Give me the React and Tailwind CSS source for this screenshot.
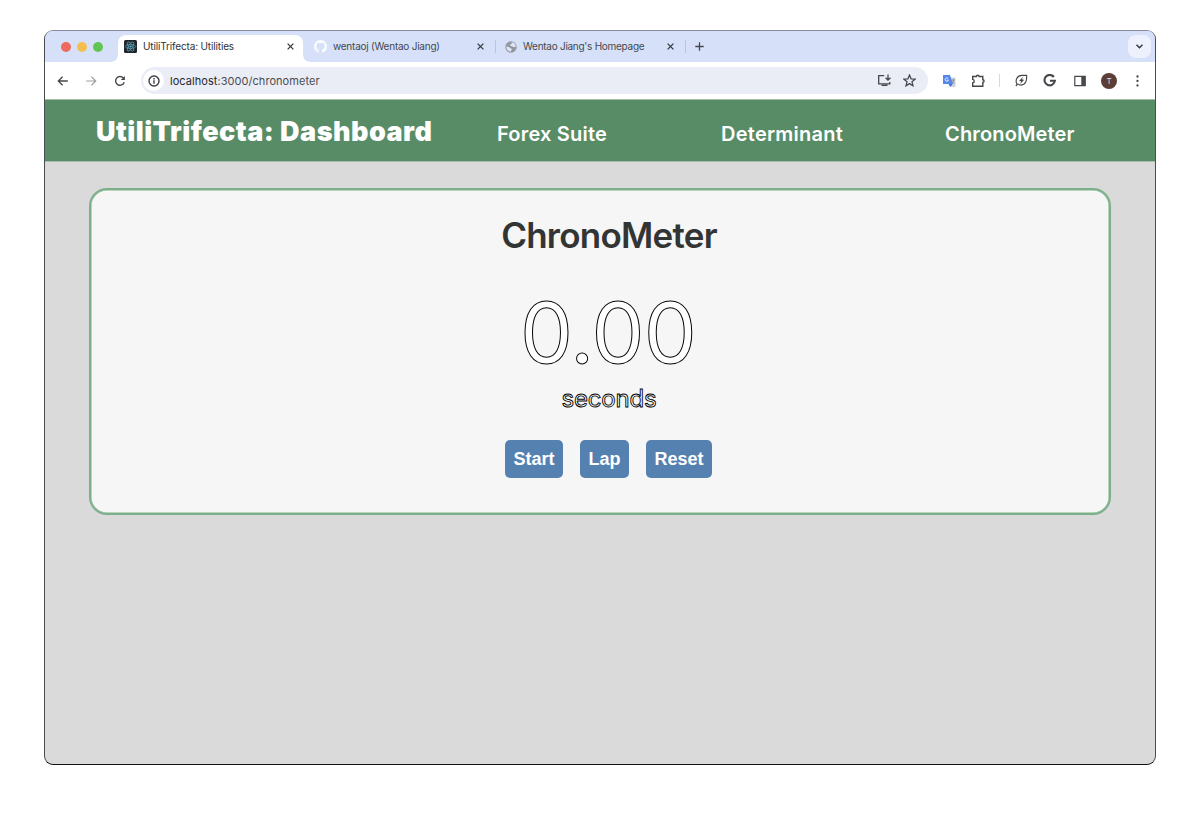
import React from "react";

function Close() {
  return (
    <svg className="block h-[7px] w-[7px] shrink-0" viewBox="0 0 7 7" stroke="#3a3c40" strokeWidth="1.3">
      <path d="M.6 .6 6.4 6.4M6.4 .6 .6 6.4" />
    </svg>
  );
}

function ReactLogo() {
  return (
    <svg className="block h-[13px] w-[13px] shrink-0" viewBox="0 0 13 13" fill="none" stroke="#5fa8bf" strokeWidth=".7">
      <rect width="13" height="13" rx="1.5" fill="#20242b" stroke="none" />
      <ellipse cx="6.5" cy="6.5" rx="5.2" ry="2" />
      <ellipse cx="6.5" cy="6.5" rx="5.2" ry="2" transform="rotate(60 6.5 6.5)" />
      <ellipse cx="6.5" cy="6.5" rx="5.2" ry="2" transform="rotate(120 6.5 6.5)" />
      <circle cx="6.5" cy="6.5" r=".8" fill="#5fa8bf" />
    </svg>
  );
}

function GitHubLogo() {
  return (
    <svg className="block h-[13px] w-[13px] shrink-0" viewBox="0 0 16 16" fill="#fbfcff">
      <path d="M8 0C3.58 0 0 3.58 0 8c0 3.54 2.29 6.53 5.47 7.59.4.07.55-.17.55-.38 0-.19-.01-.82-.01-1.49-2.01.37-2.53-.49-2.69-.94-.09-.23-.48-.94-.82-1.13-.28-.15-.68-.52-.01-.53.63-.01 1.08.58 1.23.82.72 1.21 1.87.87 2.33.66.07-.52.28-.87.51-1.07-1.78-.2-3.64-.89-3.64-3.95 0-.87.31-1.59.82-2.15-.08-.2-.36-1.02.08-2.12 0 0 .67-.21 2.2.82a7.6 7.6 0 0 1 4 0c1.53-1.04 2.2-.82 2.2-.82.44 1.1.16 1.92.08 2.12.51.56.82 1.27.82 2.15 0 3.07-1.87 3.75-3.65 3.95.29.25.54.73.54 1.48 0 1.07-.01 1.93-.01 2.2 0 .21.15.46.55.38A8 8 0 0 0 16 8c0-4.42-3.58-8-8-8z" />
    </svg>
  );
}

function Globe() {
  return (
    <svg className="block h-[12px] w-[12px] shrink-0" viewBox="0 0 12 12">
      <circle cx="6" cy="6" r="5.7" fill="#94979d" />
      <path d="M6.3 1.3C8.7 1.3 10.7 3.2 10.8 5.5 9.6 6.4 8.3 6.2 7.3 5.2L5.4 5 5.1 3.6 7 2.7zM1.3 5.6 4 5.9l1.8 1.5 1.4.6-1 1.1-.2 1.6C3.3 10.6 1.3 8.4 1.3 5.6z" fill="#dfe7f7" />
    </svg>
  );
}

function TabStrip() {
  return (
    <div className="flex h-[31px] items-center bg-[#d6e1f9] text-[10px] text-[#45484d]">
      <div className="ml-[16px] flex w-[57px] shrink-0 gap-[6px]">
        <span className="h-[10px] w-[10px] rounded-full bg-[#ed6a5e]" />
        <span className="h-[10px] w-[10px] rounded-full bg-[#f5bf4f]" />
        <span className="h-[10px] w-[10px] rounded-full bg-[#61c554]" />
      </div>
      <div className="relative flex h-[27px] w-[185px] shrink-0 items-center self-end rounded-t-[8px] bg-white pr-[9px] pb-[5px] pl-[6px] text-[#303236]">
        <svg className="absolute bottom-0 -left-[8px] h-2 w-2" viewBox="0 0 8 8"><path d="M8 0v8H0C5 8 8 5 8 0z" fill="#fff" /></svg>
        <svg className="absolute -right-[8px] bottom-0 h-2 w-2" viewBox="0 0 8 8"><path d="M0 0v8h8C3 8 0 5 0 0z" fill="#fff" /></svg>
        <ReactLogo />
        <span className="ml-[6px] flex-1 tracking-[-0.15px] whitespace-nowrap">UtiliTrifecta: Utilities</span>
        <Close />
      </div>
      <div className="flex w-[181px] shrink-0 items-center pl-[11px]">
        <GitHubLogo />
        <span className="ml-[6px] flex-1 tracking-[-0.23px] whitespace-nowrap">wentaoj (Wentao Jiang)</span>
        <Close />
      </div>
      <span className="ml-[11px] h-[13px] w-px shrink-0 bg-[#aec7ef]" />
      <div className="flex w-[178px] shrink-0 items-center pl-[9px]">
        <Globe />
        <span className="ml-[6px] flex-1 tracking-[-0.27px] whitespace-nowrap">Wentao Jiang's Homepage</span>
        <Close />
      </div>
      <span className="ml-[11px] h-[13px] w-px shrink-0 bg-[#aec7ef]" />
      <svg className="ml-[9px] h-[9px] w-[9px] shrink-0" viewBox="0 0 9 9" stroke="#45484d" strokeWidth="1.3"><path d="M4.5 .3v8.4M.3 4.5h8.4" /></svg>
      <span className="mr-[4px] ml-auto flex h-[23px] w-[23px] items-center justify-center rounded-[8px] bg-[#ecf1fd]">
        <svg className="h-[5px] w-[7px]" viewBox="0 0 7 5" fill="none" stroke="#303236" strokeWidth="1.4"><path d="M.5 .8 3.5 3.8 6.5 .8" /></svg>
      </span>
    </div>
  );
}

function Toolbar() {
  return (
    <div className="flex h-[37px] items-center bg-white">
      <svg className="ml-[12px] h-[12px] w-[12px] shrink-0" viewBox="0 0 12 12" fill="none" stroke="#45474a" strokeWidth="1.3"><path d="M10.8 6H1.5M5.6 1.7 1.3 6l4.3 4.3" /></svg>
      <svg className="ml-[16px] h-[12px] w-[12px] shrink-0" viewBox="0 0 12 12" fill="none" stroke="#9b9da0" strokeWidth="1.2"><path d="M1.2 6h9.3M6.4 1.7 10.7 6l-4.3 4.3" /></svg>
      <svg className="ml-[17px] h-[12px] w-[12px] shrink-0" viewBox="0 0 12 12" fill="none" stroke="#45474a" strokeWidth="1.4"><path d="M10.2 7.2A4.4 4.4 0 1 1 9.4 3.1" /><path d="M10.9 1v4.1H6.8z" fill="#45474a" stroke="none" /></svg>
      <div className="ml-[15px] flex h-[27px] w-[787px] shrink-0 items-center rounded-full bg-[#eaedf6]">
        <span className="ml-[2px] flex h-[21px] w-[21px] items-center justify-center rounded-full bg-white">
          <svg className="h-[12px] w-[12px]" viewBox="0 0 12 12" fill="none" stroke="#3c3e42" strokeWidth="1.4"><circle cx="6" cy="6" r="5" /><path d="M6 5.3v3.5M6 3.1v1.3" /></svg>
        </span>
        <span className="mt-px ml-[6px] flex-1 text-[11px] tracking-[0.05px] text-[#4a4c51]"><span className="text-[#26282b]">localhost</span>:3000/chronometer</span>
        <svg className="h-[13px] w-[15px] shrink-0" viewBox="0 0 15 13" fill="none" stroke="#45474a" strokeWidth="1.3"><path d="M7.2 1.6H1.7v8.2h11.1V8M4.5 11.3h6M11 .5v5.5M8.6 3.8 11 6.2l2.5-2.4" /></svg>
        <svg className="mr-[12px] ml-[11px] h-[13px] w-[13px] shrink-0" viewBox="0 0 13 13" fill="none" stroke="#45474a" strokeWidth="1.25"><path d="m6.5 1 1.6 3.8 4 .3L9 7.8l1 4-3.5-2.2L3 11.8l1-4L.9 5.1l4-.3z" /></svg>
      </div>
      <svg className="ml-[15px] h-[14px] w-[13px] shrink-0" viewBox="0 0 13 14">
        <path d="M5 3.5h7.5V13H6z" fill="#d2d4d7" />
        <path d="M0 1h7l3 9H0z" fill="#5687ed" />
        <path d="M5.5 10h4.2l-2.1 2.8z" fill="#3f74e0" />
        <path d="M5.2 4.5a1.7 1.7 0 1 0 .3 1.5H4" fill="none" stroke="#fff" strokeWidth=".8" />
        <path d="M8.8 6h3.2M10.5 5v1c0 2-1 3-1.5 3.5M9.5 7.2l2.3 2.5" fill="none" stroke="#777b82" strokeWidth=".7" />
      </svg>
      <svg className="ml-[15px] h-[14px] w-[15px] shrink-0" viewBox="0 0 15 14" fill="none" stroke="#45474a" strokeWidth="1.4"><path d="M1.7 2.5h3.6c0-1.7 2.8-1.7 2.8 0h3.7v3.2c1.7 0 1.7 2.8 0 2.8v3.8H1.7V9c2-.2 2-3.4 0-3.6z" /></svg>
      <span className="ml-[13px] h-[13px] w-px shrink-0 bg-[#ccd9f1]" />
      <svg className="ml-[15px] h-[13px] w-[13px] shrink-0" viewBox="0 0 13 13" fill="none" stroke="#45474a" strokeWidth="1.15"><path d="M2 10.3C-.2 6 2.2 1.4 7 1.4h4.6c.4 5.6-1.2 9.7-5.4 9.7-1.6 0-2.7-.4-3.4-1.2M2.8 9.8.8 12" /><path d="M8 2.8 4 6.9l2.2.3-.9 2.9 3.9-4.3-2.2-.3z" fill="#45474a" stroke="none" /></svg>
      <svg className="ml-[15px] h-[13px] w-[13px] shrink-0" viewBox="0 0 13 13" fill="none" stroke="#45474a" strokeWidth="2.1"><path d="M10.9 3A5.2 5.2 0 1 0 11.9 6.7H6.9" /></svg>
      <svg className="ml-[18px] h-[12px] w-[12px] shrink-0" viewBox="0 0 12 12"><path d="M.8 1.3h10.3v9.3H.8z" fill="none" stroke="#45474a" strokeWidth="1.2" /><path d="M7.3 1h4.2v10H7.3z" fill="#45474a" /></svg>
      <span className="ml-[15px] flex h-[16px] w-[16px] shrink-0 items-center justify-center rounded-full bg-[#5b3f37] text-[8px] text-[#e5dcd9]">T</span>
      <svg className="ml-[19px] h-[12px] w-[3px] shrink-0" viewBox="0 0 3 12" fill="#45474a"><circle cx="1.5" cy="1.5" r="1.15" /><circle cx="1.5" cy="6" r="1.15" /><circle cx="1.5" cy="10.5" r="1.15" /></svg>
    </div>
  );
}

function NavBar() {
  return (
    <nav className="flex h-[63px] items-center border-t border-b border-[#a5bfad] bg-[#588c67] text-[20px] font-semibold whitespace-nowrap text-white">
      <h1 className="mt-[3px] ml-[51px] w-[401px] shrink-0 text-[27px] font-black tracking-[0.47px]">UtiliTrifecta: Dashboard</h1>
      <a className="mt-[6px] w-[224px] shrink-0 tracking-[0.2px]">Forex Suite</a>
      <a className="mt-[6px] w-[224px] shrink-0 tracking-[0.25px]">Determinant</a>
      <a className="mt-[6px] shrink-0 tracking-[0.15px]">ChronoMeter</a>
    </nav>
  );
}

const buttonClass = "h-[38px] rounded-[5px] bg-[#5581b1] font-['Liberation_Sans',sans-serif] text-[18px] font-bold text-white";

function Chronometer() {
  return (
    <section className="mx-[44px] mt-[26px] flex h-[327px] flex-col items-center rounded-[18px] border-[2px] border-[#7cb08b] bg-[#f6f6f6] pl-[18px] shadow-[inset_0_0_0_0.5px_#7cb08b]">
      <h2 className="mt-[22px] text-[35px] leading-[46px] font-semibold tracking-[-0.75px] text-[#333534]">ChronoMeter</h2>
      <div className="mt-[32px] mr-[2px] text-[84px] leading-[86px] font-normal tracking-[-0.7px] text-white [-webkit-text-stroke:1px_#000]">0.00</div>
      <div className="mt-[6px] text-[24px] leading-[34px] font-normal tracking-[-0.2px] text-white [-webkit-text-stroke:0.9px_#000]">seconds</div>
      <div className="mt-[24px] mr-[1px] flex">
        <button className={buttonClass + " w-[58px]"}>Start</button>
        <button className={buttonClass + " ml-[17px] w-[49px]"}>Lap</button>
        <button className={buttonClass + " ml-[17px] w-[66px]"}>Reset</button>
      </div>
    </section>
  );
}

export default function App() {
  return (
    <div className="h-[823px] w-[1200px] overflow-hidden bg-white pt-[30px] pl-[44px] font-['Inter',sans-serif]">
      <div className="h-[735px] w-[1112px] overflow-hidden rounded-[9px] border border-[#4c4c4e] border-t-[#858b9d] border-b-[#111] bg-[#dadada]">
        <TabStrip />
        <Toolbar />
        <NavBar />
        <Chronometer />
      </div>
    </div>
  );
}
